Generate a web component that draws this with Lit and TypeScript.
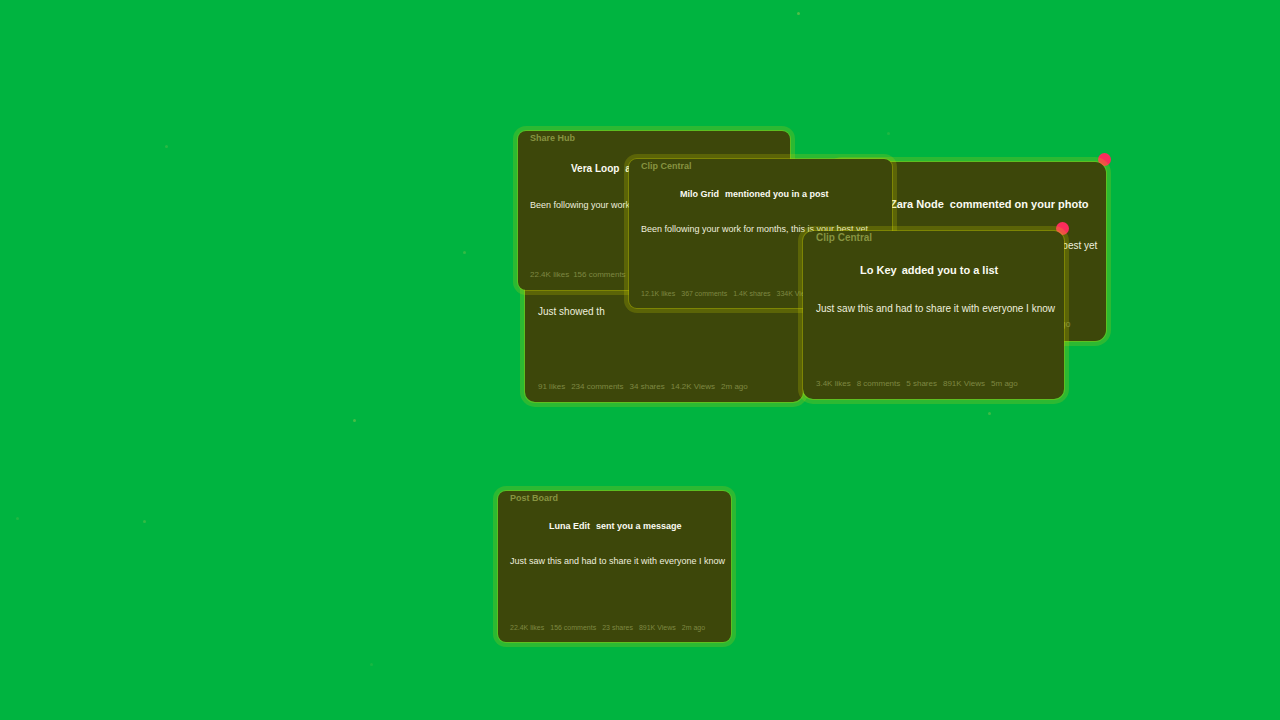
import { LitElement, html, css, nothing } from "lit";
import { customElement, property } from "lit/decorators.js";
import { styleMap } from "lit/directives/style-map.js";

type Size = "small" | "medium" | "large" | "huge";

interface Note {
  app: string;
  name: string;
  action: string;
  text: string;
  stats: string[];
  size: Size;
  unread?: boolean;
  x: number;
  y: number;
  w: number;
  h: number;
}

const STAGE_W = 1280;
const STAGE_H = 720;

// Painted back to front.
const NOTES: Note[] = [
  {
    app: "Share Hub", name: "Vera Loop", action: "sent you a message", text: "Just showed th",
    stats: ["91 likes", "234 comments", "34 shares", "14.2K Views", "2m ago"],
    size: "large", x: 524, y: 233, w: 280, h: 170,
  },
  {
    app: "Share Hub", name: "Vera Loop", action: "added you to a list",
    text: "Been following your work",
    stats: ["22.4K likes", "156 comments"],
    size: "medium", x: 517, y: 130, w: 274, h: 161,
  },
  {
    app: "Feed Hub", name: "Zara Node", action: "commented on your photo",
    text: "Been following your work for months, this is your best yet",
    stats: ["91 likes", "34 comments", "23 shares", "334K Views", "5m ago"],
    size: "huge", unread: true, x: 830, y: 161, w: 277, h: 181,
  },
  {
    app: "Clip Central", name: "Milo Grid", action: "mentioned you in a post",
    text: "Been following your work for months, this is your best yet",
    stats: ["12.1K likes", "367 comments", "1.4K shares", "334K Views"],
    size: "small", x: 628, y: 158, w: 265, h: 151,
  },
  {
    app: "Clip Central", name: "Lo Key", action: "added you to a list",
    text: "Just saw this and had to share it with everyone I know",
    stats: ["3.4K likes", "8 comments", "5 shares", "891K Views", "5m ago"],
    size: "large", unread: true, x: 802, y: 230, w: 263, h: 170,
  },
  {
    app: "Post Board", name: "Luna Edit", action: "sent you a message",
    text: "Just saw this and had to share it with everyone I know",
    stats: ["22.4K likes", "156 comments", "23 shares", "891K Views", "2m ago"],
    size: "small", x: 497, y: 490, w: 235, h: 153,
  },
];

const SPARKS = [
  { x: 798, y: 13, a: 0.4 },
  { x: 166, y: 146, a: 0.2 },
  { x: 464, y: 252, a: 0.25 },
  { x: 354, y: 420, a: 0.35 },
  { x: 17, y: 518, a: 0.15 },
  { x: 144, y: 521, a: 0.25 },
  { x: 371, y: 664, a: 0.12 },
  { x: 989, y: 413, a: 0.3 },
  { x: 888, y: 133, a: 0.15 },
];

const pct = (v: number, total: number) => `${(v / total) * 100}%`;

@customElement("note-card")
export class NoteCard extends LitElement {
  @property({ attribute: false }) note!: Note;

  static styles = css`
    :host {
      display: block;
      position: relative;
      isolation: isolate;
    }
    .dot {
      position: absolute;
      top: -8px;
      right: -4px;
      width: 13px;
      height: 13px;
      border-radius: 50%;
      background: #fb2c5c;
      z-index: -1;
    }
    .card {
      box-sizing: border-box;
      min-height: inherit;
      display: flex;
      flex-direction: column;
      border: 1px solid rgba(200, 205, 0, 0.32);
      box-shadow: 0 0 0 4px rgba(200, 205, 0, 0.22);
      background: #3d470a;
      background-clip: padding-box;
      white-space: nowrap;
      overflow: hidden;
    }
    .app {
      font-weight: 700;
      line-height: 14px;
      color: #879440;
    }
    .title {
      display: flex;
      font-weight: 700;
      line-height: 15px;
      color: #fbfbf2;
    }
    .text {
      margin: 0;
      line-height: 16px;
      color: #eeefdf;
    }
    .stats {
      display: flex;
      margin: auto 0 0;
      padding: 0;
      list-style: none;
      line-height: 10px;
      color: #7d8842;
    }

    .small { border-radius: 9px; padding: 0 12px 9px; font-size: 9px; }
    .small .title { margin: 14px 0 19px 39px; gap: 6px; font-size: 9px; }
    .small .stats { gap: 6px; font-size: 7px; }

    .medium { border-radius: 9px; padding: 0 12px 10px; font-size: 9px; }
    .medium .title { margin: 16px 0 21px 41px; gap: 6px; font-size: 10px; }
    .medium .stats { gap: 4px; font-size: 8px; }

    .large { border-radius: 11px; padding: 0 13px 10px; font-size: 10px; }
    .large .title { margin: 18px 0 23px 44px; gap: 5px; font-size: 11px; }
    .large .stats { gap: 6px; font-size: 8px; }

    .huge { border-radius: 12px; padding: 0 14px 12px; font-size: 10px; }
    .huge .title { margin: 21px 0 26px 45px; gap: 6px; font-size: 11px; }
    .huge .stats { gap: 6px; font-size: 9px; }
  `;

  render() {
    const n = this.note;
    return html`
      ${n.unread ? html`<span class="dot"></span>` : nothing}
      <article class="card ${n.size}">
        <div class="app">${n.app}</div>
        <h2 class="title"><span>${n.name}</span><span>${n.action}</span></h2>
        <p class="text">${n.text}</p>
        <ul class="stats">${n.stats.map((s) => html`<li>${s}</li>`)}</ul>
      </article>
    `;
  }
}

@customElement("app-root")
export class AppRoot extends LitElement {
  static styles = css`
    :host {
      display: block;
      font-family: "Liberation Sans", Arial, sans-serif;
    }
    .stage {
      position: relative;
      min-height: 100vh;
      overflow: hidden;
      background: #00b440;
    }
    .note {
      position: absolute;
    }
    .spark {
      position: absolute;
      width: 3px;
      height: 3px;
      margin: -1px 0 0 -1px;
      border-radius: 50%;
      background: #c8d050;
    }
  `;

  render() {
    return html`
      <main class="stage">
        ${SPARKS.map(
          (s) => html`<span class="spark" style=${styleMap({
            left: pct(s.x, STAGE_W), top: pct(s.y, STAGE_H), opacity: String(s.a),
          })}></span>`,
        )}
        ${NOTES.map(
          (n) => html`<note-card class="note" .note=${n} style=${styleMap({
            left: pct(n.x, STAGE_W), top: pct(n.y, STAGE_H),
            width: `${n.w}px`, minHeight: `${n.h}px`,
          })}></note-card>`,
        )}
      </main>
    `;
  }
}
